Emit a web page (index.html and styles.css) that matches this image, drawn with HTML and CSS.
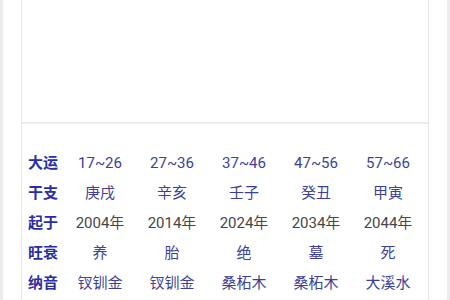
FILE: index.html
```html
<!DOCTYPE html>
<html lang="zh">
<head>
<meta charset="utf-8">
<link rel="stylesheet" href="styles.css">
</head>
<body>
<div class="page">
  <div class="edge"></div>
  <div class="gutter">
    <div class="card">
      <div class="top"></div>
      <div class="table">
        <div class="lbl">大运</div><div class="v">17~26</div><div class="v">27~36</div><div class="v">37~46</div><div class="v">47~56</div><div class="v">57~66</div>
        <div class="lbl">干支</div><div class="v">庚戌</div><div class="v">辛亥</div><div class="v">壬子</div><div class="v">癸丑</div><div class="v">甲寅</div>
        <div class="lbl">起于</div><div class="v yr">2004年</div><div class="v yr">2014年</div><div class="v yr">2024年</div><div class="v yr">2034年</div><div class="v yr">2044年</div>
        <div class="lbl">旺衰</div><div class="v">养</div><div class="v">胎</div><div class="v">绝</div><div class="v">墓</div><div class="v">死</div>
        <div class="lbl">纳音</div><div class="v">钗钏金</div><div class="v">钗钏金</div><div class="v">桑柘木</div><div class="v">桑柘木</div><div class="v">大溪水</div>
      </div>
    </div>
  </div>
  <div class="edge"></div>
</div>
</body>
</html>
```
FILE: styles.css
```css
html, body {
  margin: 0;
  padding: 0;
  background: #fff;
}
.page {
  display: flex;
  width: 450px;
  height: 300px;
  overflow: hidden;
  font-family: Roboto, "Noto Sans CJK SC", sans-serif;
}
.edge {
  width: 3px;
  background: #ececec;
  flex: none;
}
.gutter {
  flex: 1;
  padding: 0 18px;
  display: flex;
}
.card {
  flex: 1;
  border-left: 1px solid #e6e6e6;
  border-right: 1px solid #e6e6e6;
  display: flex;
  flex-direction: column;
}
.top {
  height: 122px;
  border-bottom: 2px solid #ebebeb;
  flex: none;
}
.table {
  display: grid;
  grid-template-columns: 36px repeat(5, 72px);
  grid-auto-rows: 30px;
  padding: 24px 0 0 6px;
  font-size: 15px;
  line-height: 30px;
}
.lbl {
  color: #2a2ea6;
  font-weight: bold;
}
.v {
  text-align: center;
  color: #3d3f98;
}
.v.yr {
  color: #464646;
}
```
